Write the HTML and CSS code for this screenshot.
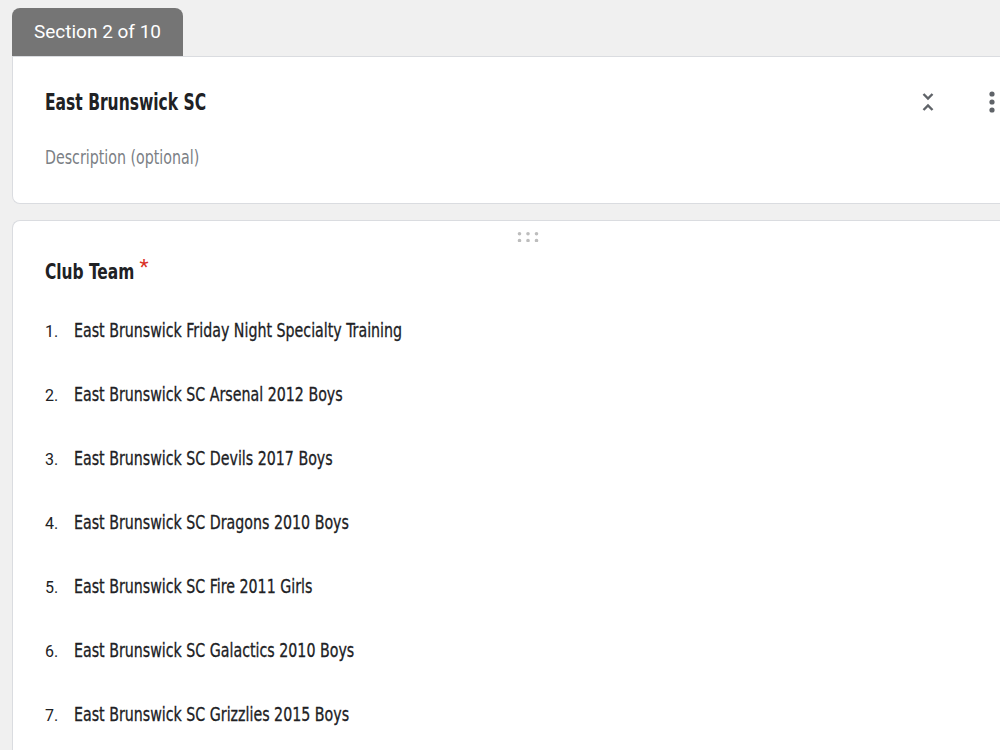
FILE: index.html
```html
<!DOCTYPE html>
<html lang="en">
<head>
    <meta charset="UTF-8">
    <meta name="viewport" content="width=device-width, initial-scale=1.0">
    <title>East Brunswick SC</title>
    <link rel="stylesheet" href="styles.css">
</head>
<body>

    <div class="form">
        <div class="section-tab">Section 2 of 10</div>

        <div class="card section-card">
            <div class="section-head">
                <h2><span class="narrow title">East Brunswick SC</span></h2>
                <div class="tools">
                    <svg class="collapse" width="14" height="22" viewBox="0 0 14 22">
                        <path d="M2.5 3l4.5 4.5 4.5-4.5" fill="none" stroke="#5f6368" stroke-width="2.4"/>
                        <path d="M2.5 19l4.5-4.5 4.5 4.5" fill="none" stroke="#5f6368" stroke-width="2.4"/>
                    </svg>
                    <svg class="more" width="8" height="22" viewBox="0 0 8 22">
                        <circle cx="4" cy="3" r="2.6" fill="#5f6368"/>
                        <circle cx="4" cy="11" r="2.6" fill="#5f6368"/>
                        <circle cx="4" cy="19" r="2.6" fill="#5f6368"/>
                    </svg>
                </div>
            </div>
            <p class="desc"><span class="narrow">Description (optional)</span></p>
        </div>

        <div class="card question-card">
            <div class="drag">
                <svg width="22" height="10" viewBox="0 0 22 10">
                    <circle cx="2.5" cy="1.8" r="1.8" fill="#bdbdbd"/>
                    <circle cx="11" cy="1.8" r="1.8" fill="#bdbdbd"/>
                    <circle cx="19.5" cy="1.8" r="1.8" fill="#bdbdbd"/>
                    <circle cx="2.5" cy="8.6" r="1.8" fill="#bdbdbd"/>
                    <circle cx="11" cy="8.6" r="1.8" fill="#bdbdbd"/>
                    <circle cx="19.5" cy="8.6" r="1.8" fill="#bdbdbd"/>
                </svg>
            </div>
            <h3><span class="narrow">Club Team</span><span class="req">*</span></h3>
            <ol class="options">
                <li><span class="num">1.</span><span class="narrow label">East Brunswick Friday Night Specialty Training</span></li>
                <li><span class="num">2.</span><span class="narrow label">East Brunswick SC Arsenal 2012 Boys</span></li>
                <li><span class="num">3.</span><span class="narrow label">East Brunswick SC Devils 2017 Boys</span></li>
                <li><span class="num">4.</span><span class="narrow label">East Brunswick SC Dragons 2010 Boys</span></li>
                <li><span class="num">5.</span><span class="narrow label">East Brunswick SC Fire 2011 Girls</span></li>
                <li><span class="num">6.</span><span class="narrow label">East Brunswick SC Galactics 2010 Boys</span></li>
                <li><span class="num">7.</span><span class="narrow label">East Brunswick SC Grizzlies 2015 Boys</span></li>
            </ol>
        </div>
    </div>

</body>
</html>
```

FILE: styles.css
```css
body {
    margin: 0;
    padding: 0;
    background-color: #f0f0f0;
    font-family: "DejaVu Sans Condensed", "DejaVu Sans", sans-serif;
    color: #202124;
    overflow: hidden;
}

.form {
    padding: 8px 0 0 12px;
}

/* condensed look: squeeze the text sideways */
.narrow {
    display: inline-block;
    transform: scaleX(0.79);
    transform-origin: left center;
    white-space: nowrap;
}

.section-tab {
    display: inline-block;
    width: 171px;
    height: 48px;
    line-height: 48px;
    text-align: center;
    background-color: #757575;
    color: #ffffff;
    font-family: Roboto, sans-serif;
    font-size: 19px;
    border-radius: 8px 8px 0 0;
    vertical-align: top;
}

.card {
    background-color: #ffffff;
    border: 1px solid #dadce0;
    border-right: none;
    margin-right: -20px;
}

.section-card {
    height: 146px;
    border-radius: 0 0 0 8px;
    padding: 0 0 0 32px;
}

.section-head {
    display: flex;
    align-items: center;
    padding-top: 33px;
}

.section-head h2 {
    margin: 0;
    flex: 1;
    font-size: 23px;
    font-weight: bold;
    line-height: 24px;
}

.title {
    transform: scaleX(0.75);
}

.tools {
    display: flex;
    align-items: center;
    gap: 53px;
    padding-right: 24px;
}

.desc {
    margin: 31px 0 0;
    font-size: 20px;
    color: #7b8085;
    line-height: 24px;
}

.question-card {
    margin-top: 16px;
    border-radius: 8px 0 0 0;
    padding: 0 0 0 32px;
    height: 600px;
}

.drag {
    width: 22px;
    margin: 11px 0 0 472px;
    height: 11px;
    line-height: 0;
}

.question-card h3 {
    margin: 11px 0 0;
    font-size: 22px;
    font-weight: bold;
    line-height: 26px;
}

.question-card h3 .narrow {
    transform: scaleX(0.78);
}

.req {
    display: inline-block;
    margin-left: -20px;
    color: #d93025;
    font-family: Roboto, sans-serif;
    font-weight: normal;
    font-size: 21px;
    vertical-align: 5px;
}

.options {
    list-style: none;
    margin: 33px 0 0;
    padding: 0;
}

.options li {
    display: flex;
    align-items: baseline;
    height: 64px;
}

.num {
    width: 29px;
    font-family: Roboto, sans-serif;
    font-size: 16px;
    color: #202124;
}

.label {
    font-size: 20px;
    color: #202124;
    -webkit-text-stroke: 0.3px #202124;
}
```
